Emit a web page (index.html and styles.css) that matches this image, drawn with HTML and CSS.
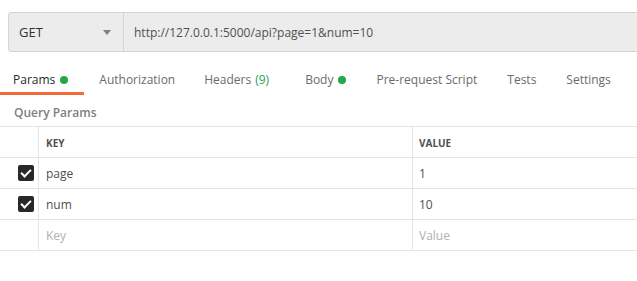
FILE: index.html
```html
<!DOCTYPE html>
<html>
<head>
	<meta charset="utf-8">
	<title>Request</title>
	<link rel="stylesheet" href="styles.css">
</head>
<body>
	<div class="request-bar">
		<div class="method">
			<span>GET</span>
			<span class="caret"></span>
		</div>
		<div class="url">http://127.0.0.1:5000/api?page=1&amp;num=10</div>
	</div>

	<div class="tabs">
		<span class="tab active">Params <i class="dot"></i></span>
		<span class="tab">Authorization</span>
		<span class="tab headers">Headers <b class="count">(9)</b></span>
		<span class="tab">Body <i class="dot"></i></span>
		<span class="tab">Pre-request Script</span>
		<span class="tab">Tests</span>
		<span class="tab">Settings</span>
	</div>

	<div class="section-title">Query Params</div>

	<div class="params">
		<div class="row head">
			<div class="cell check"></div>
			<div class="cell key">KEY</div>
			<div class="cell value">VALUE</div>
		</div>
		<div class="row">
			<div class="cell check"><span class="box"></span></div>
			<div class="cell key">page</div>
			<div class="cell value">1</div>
		</div>
		<div class="row">
			<div class="cell check"><span class="box"></span></div>
			<div class="cell key">num</div>
			<div class="cell value">10</div>
		</div>
		<div class="row">
			<div class="cell check"></div>
			<div class="cell key placeholder">Key</div>
			<div class="cell value placeholder">Value</div>
		</div>
	</div>
</body>
</html>
```

FILE: styles.css
```css
*{
	margin: 0;
	padding: 0;
	box-sizing: border-box;
}
body{
	background: white;
	font-family: "Open Sans", "Noto Sans", sans-serif;
	font-size: 12px;
	color: #505050;
	overflow: hidden;
}
.request-bar{
	display: flex;
	height: 40px;
	margin: 12px 0 0 8px;
	width: 640px;
	background: #ececec;
	border: 1px solid #d4d4d4;
	border-radius: 3px 0 0 3px;
}
.method{
	width: 115px;
	display: flex;
	align-items: center;
	justify-content: space-between;
	padding: 0 12px 0 10px;
	border-right: 1px solid #d4d4d4;
	font-size: 13px;
	color: #333;
}
.caret{
	width: 0;
	height: 0;
	border-left: 4px solid transparent;
	border-right: 4px solid transparent;
	border-top: 5px solid #808080;
}
.url{
	display: flex;
	align-items: center;
	padding-left: 10px;
	font-size: 12px;
	color: #505050;
}
.tabs{
	display: flex;
	margin-top: 12px;
	height: 31px;
}
.tab{
	display: flex;
	align-items: center;
	padding: 3px 15px 0;
	border-bottom: 3px solid transparent;
	white-space: nowrap;
	font-size: 12px;
	color: #6b6b6b;
}
.tab.active{
	padding-left: 13px;
	padding-right: 16px;
	color: #282828;
	border-bottom-color: #f26b3a;
}
.tab.headers{
	padding-left: 14px;
	padding-right: 21px;
}
.dot{
	display: inline-block;
	width: 8px;
	height: 8px;
	margin-left: 5px;
	border-radius: 50%;
	background: #26a549;
}
.count{
	font-weight: normal;
	color: #26a549;
	margin-left: 4px;
}
.section-title{
	padding: 9px 0 0 14px;
	height: 31px;
	font-size: 12px;
	font-weight: 600;
	color: #808080;
}
.params{
	border-top: 1px solid #e4e4e4;
}
.row{
	display: grid;
	grid-template-columns: 38px 374px 1fr;
	height: 31px;
	border-bottom: 1px solid #e4e4e4;
}
.cell{
	display: flex;
	align-items: center;
	padding-left: 7px;
	font-size: 12px;
	color: #505050;
}
.cell.value{
	padding-left: 6px;
	border-left: 1px solid #e4e4e4;
}
.cell.key{
	border-left: 1px solid #e4e4e4;
}
.head .cell{
	font-size: 10px;
	font-weight: 700;
	color: #505050;
	padding-top: 1px;
}
.check{
	justify-content: flex-end;
	padding: 0 4px 0 0;
}
.box{
	width: 16px;
	height: 16px;
	border-radius: 2px;
	background: #282828;
	position: relative;
}
.box::after{
	content: "";
	position: absolute;
	left: 5px;
	top: 2px;
	width: 4px;
	height: 8px;
	border-right: 2px solid white;
	border-bottom: 2px solid white;
	transform: rotate(45deg);
}
.placeholder{
	color: #b0b0b0;
}
```
